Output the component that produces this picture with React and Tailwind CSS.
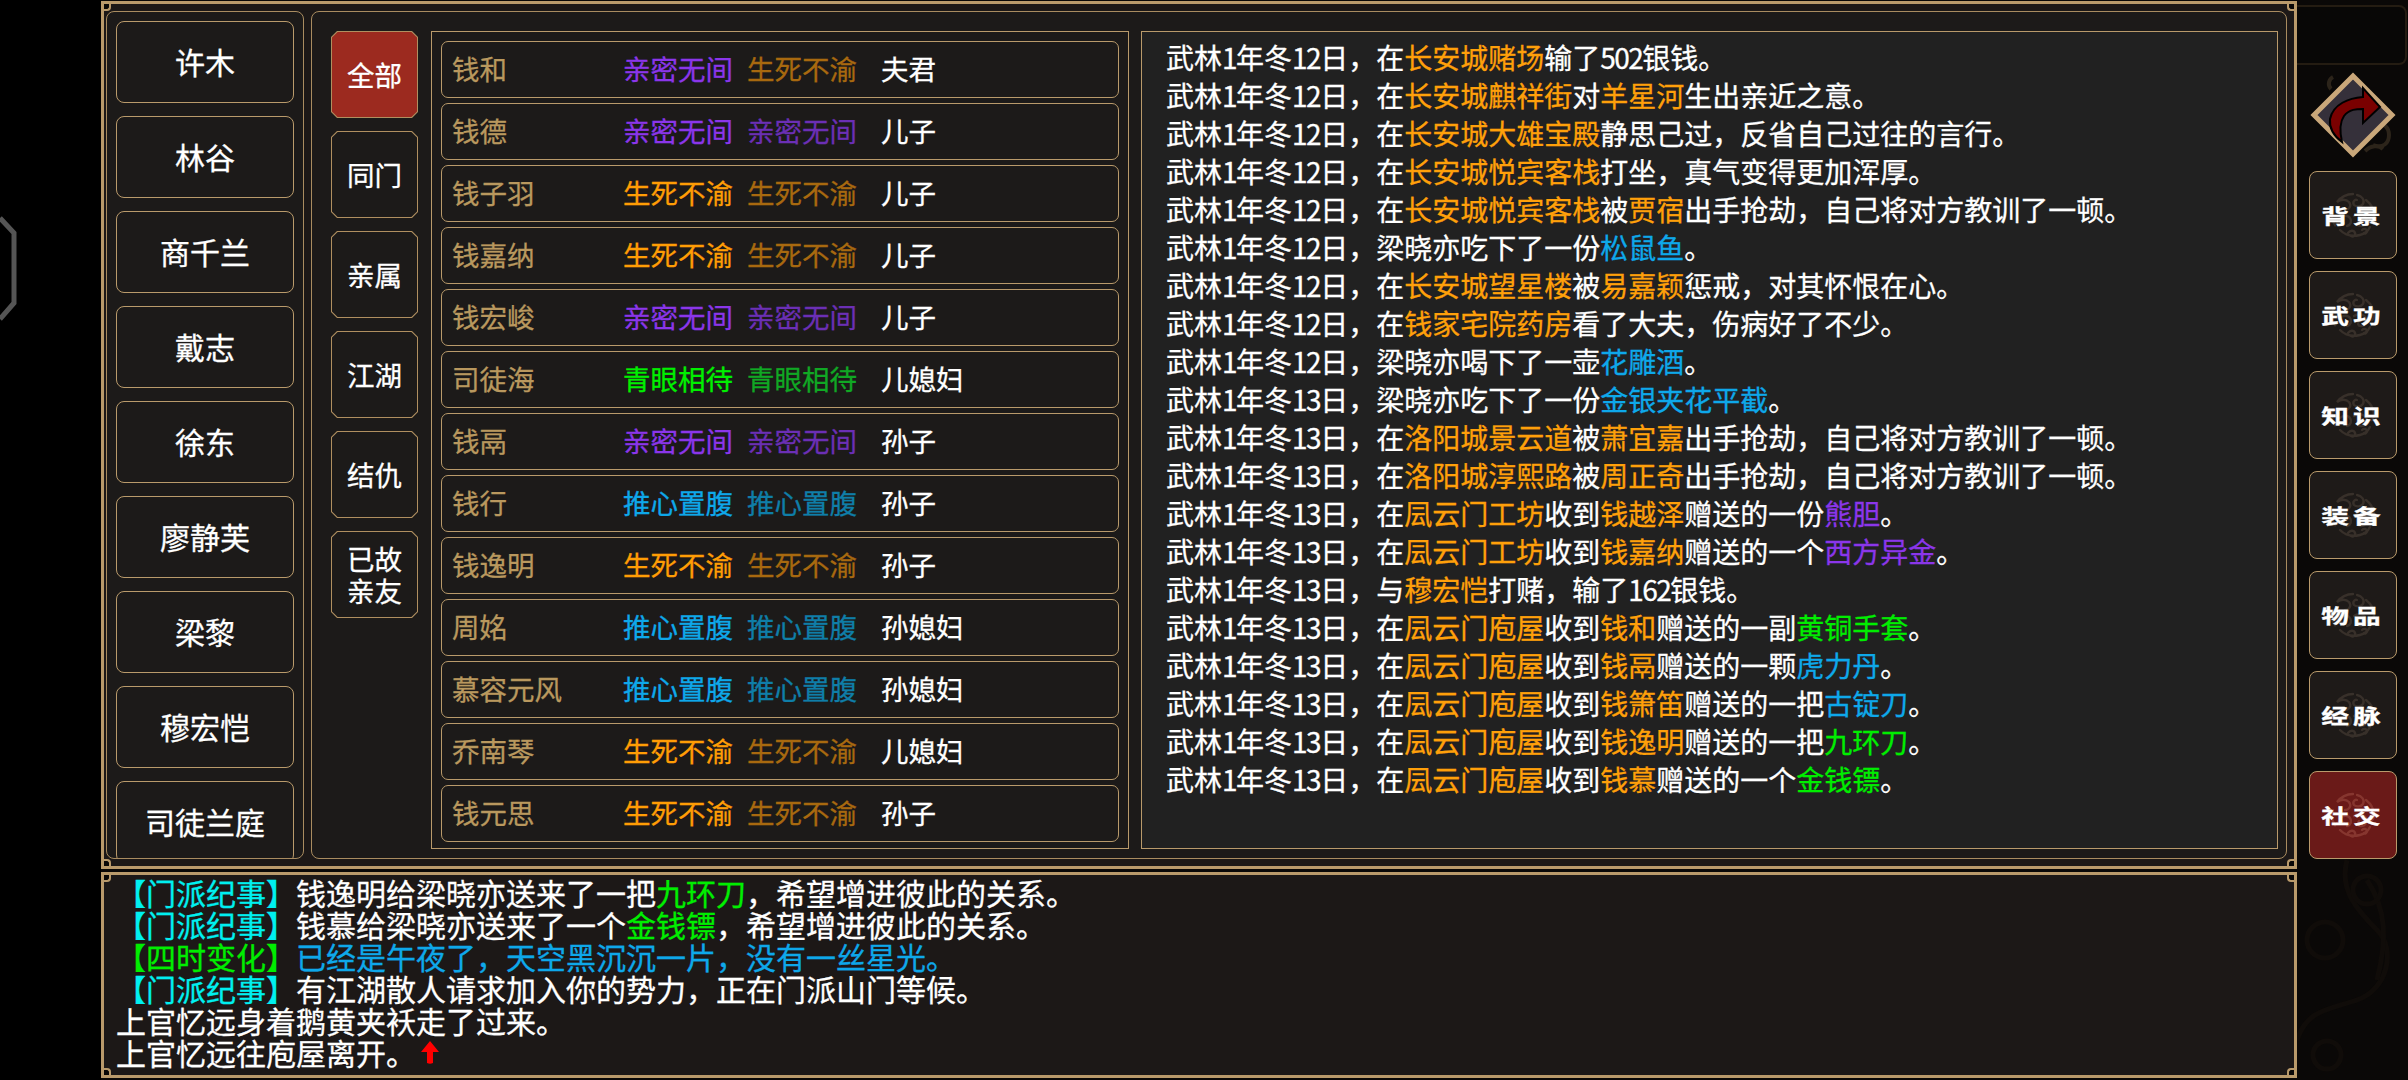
import React from 'react';

const roster = ['许木','林谷','商千兰','戴志','徐东','廖静芙','梁黎','穆宏恺','司徒兰庭'];
const tabs = [['全部'],['同门'],['亲属'],['江湖'],['结仇'],['已故','亲友']];
const Q = { t:'亲密无间', a:'text-[#8b36ea]', b:'text-[#6b2fb5]' };
const S = { t:'生死不渝', a:'text-[#ff9d05]', b:'text-[#a8690f]' };
const T = { t:'推心置腹', a:'text-[#0ea8ea]', b:'text-[#0f7ea8]' };
const G = { t:'青眼相待', a:'text-[#00f000]', b:'text-[#10a824]' };
const rows = [
  ['钱和',Q,S,'夫君'],['钱德',Q,Q,'儿子'],['钱子羽',S,S,'儿子'],['钱嘉纳',S,S,'儿子'],
  ['钱宏峻',Q,Q,'儿子'],['司徒海',G,G,'儿媳妇'],['钱鬲',Q,Q,'孙子'],['钱行',T,T,'孙子'],
  ['钱逸明',S,S,'孙子'],['周姳',T,T,'孙媳妇'],['慕容元风',T,T,'孙媳妇'],['乔南琴',S,S,'儿媳妇'],['钱元思',S,S,'孙子'],
];
const log = [
  '武林1年冬12日，在{o长安城赌场}输了502银钱。',
  '武林1年冬12日，在{o长安城麒祥街}对{o羊星河}生出亲近之意。',
  '武林1年冬12日，在{o长安城大雄宝殿}静思己过，反省自己过往的言行。',
  '武林1年冬12日，在{o长安城悦宾客栈}打坐，真气变得更加浑厚。',
  '武林1年冬12日，在{o长安城悦宾客栈}被{o贾宿}出手抢劫，自己将对方教训了一顿。',
  '武林1年冬12日，梁晓亦吃下了一份{b松鼠鱼}。',
  '武林1年冬12日，在{o长安城望星楼}被{o易嘉颖}惩戒，对其怀恨在心。',
  '武林1年冬12日，在{o钱家宅院药房}看了大夫，伤病好了不少。',
  '武林1年冬12日，梁晓亦喝下了一壶{b花雕酒}。',
  '武林1年冬13日，梁晓亦吃下了一份{b金银夹花平截}。',
  '武林1年冬13日，在{o洛阳城景云道}被{o萧宜嘉}出手抢劫，自己将对方教训了一顿。',
  '武林1年冬13日，在{o洛阳城淳熙路}被{o周正奇}出手抢劫，自己将对方教训了一顿。',
  '武林1年冬13日，在{o凨云门工坊}收到{o钱越泽}赠送的一份{p熊胆}。',
  '武林1年冬13日，在{o凨云门工坊}收到{o钱嘉纳}赠送的一个{p西方异金}。',
  '武林1年冬13日，与{o穆宏恺}打赌，输了162银钱。',
  '武林1年冬13日，在{o凨云门庖屋}收到{o钱和}赠送的一副{g黄铜手套}。',
  '武林1年冬13日，在{o凨云门庖屋}收到{o钱鬲}赠送的一颗{b虎力丹}。',
  '武林1年冬13日，在{o凨云门庖屋}收到{o钱箫笛}赠送的一把{b古锭刀}。',
  '武林1年冬13日，在{o凨云门庖屋}收到{o钱逸明}赠送的一把{g九环刀}。',
  '武林1年冬13日，在{o凨云门庖屋}收到{o钱慕}赠送的一个{g金钱镖}。',
];
const feed = [
  '{c【门派纪事】}钱逸明给梁晓亦送来了一把{g九环刀}，希望增进彼此的关系。',
  '{c【门派纪事】}钱慕给梁晓亦送来了一个{g金钱镖}，希望增进彼此的关系。',
  '{g【四时变化】}{b已经是午夜了，天空黑沉沉一片，没有一丝星光。}',
  '{c【门派纪事】}有江湖散人请求加入你的势力，正在门派山门等候。',
  '上官忆远身着鹅黄夹袄走了过来。',
];
const tone = { o:'text-[#ffa00a]', b:'text-[#0ea8ea]', p:'text-[#8b36ea]', g:'text-[#00ee00]', c:'text-[#00f0f0]' };

function Rich({ s }) {
  const parts = s.split(/(\{[a-z][^}]*\})/).filter(Boolean);
  return parts.map((p, i) => {
    if (p[0] === '{') return <span key={i} className={tone[p[1]]}>{p.slice(2, -1)}</span>;
    return p.split(/(\d+)/).map((q, j) => /^\d+$/.test(q)
      ? <span key={i + '-' + j} className="tracking-[-1.5px]">{q}</span>
      : <span key={i + '-' + j}>{q}</span>);
  });
}

function Notch({ pos }) {
  const c = {
    tl: 'left-0 top-0 border-r-2 border-b-2 rounded-br-[4px]',
    tr: 'right-0 top-0 border-l-2 border-b-2 rounded-bl-[4px]',
    bl: 'left-0 bottom-0 border-r-2 border-t-2 rounded-tr-[4px]',
    br: 'right-0 bottom-0 border-l-2 border-t-2 rounded-tl-[4px]',
  }[pos];
  return <span className={`absolute w-[7px] h-[7px] bg-[#0a0807] border-[#b99a6b] ${c}`} />;
}

function Tab({ lines, active }) {
  return (
    <div className="w-[87px] h-[87px] p-px bg-[#b08f60] [clip-path:polygon(6px_0,81px_0,87px_6px,87px_81px,81px_87px,6px_87px,0_81px,0_6px)]">
      <div className={`w-full h-full flex flex-col items-center justify-center pb-[2px] text-[27.5px] leading-[32px] text-white [clip-path:polygon(5.6px_0,79.4px_0,85px_5.6px,85px_79.4px,79.4px_85px,5.6px_85px,0_79.4px,0_5.6px)] ${active ? 'bg-[#9c2a1f]' : 'bg-[#1c1a19]'}`}>
        {lines.map((l) => <span key={l}>{l}</span>)}
      </div>
    </div>
  );
}

function Emblem() {
  return (
    <svg width="46" height="46" viewBox="0 0 46 46" fill="none" stroke="currentColor" strokeWidth="2.4" strokeLinecap="round" className="absolute left-[20px] top-[20px] opacity-90">
      <path d="M23 2a21 21 0 0 0-16 8c4-3 9-3 12 0 3 4 0 8-4 8" />
      <path d="M27 3c5 1 8 5 6 9-2 3-7 3-9 1-2-3 1-6 3-5" />
      <path d="M36 8c5 4 8 10 8 15 0 4-2 6-4 5" />
      <path d="M3 18c-2 5-1 11 2 15 2-3 6-4 9-2" />
      <path d="M10 26c3-3 8-3 10 0 2 3 1 7-3 8" />
      <path d="M24 24c4-3 10-2 12 2 2 4-1 8-5 8-3 0-4-3-2-5" />
      <path d="M10 38c5 5 12 7 20 5 4-1 8-4 10-8" />
      <path d="M18 41c2-3 6-3 7 0s-2 4-4 3" />
      <path d="M32 38c2-2 5-1 5 1s-2 3-3 2" />
    </svg>
  );
}

function SideBtn({ label, active }) {
  return (
    <div className={`relative w-[88px] h-[88px] shrink-0 rounded-[8px] border-[1.5px] border-[#b99a6b] flex items-center justify-center ${active ? 'bg-[#6a1a18] text-[#8a3a32]' : 'bg-[#1e1a18] text-[#3b332c]'}`}>
      <Emblem />
      <span className="relative text-[21px] leading-none font-bold text-white tracking-[3px] scale-x-[1.32] scale-y-[0.95]">{label}</span>
    </div>
  );
}

export default function App() {
  return (
    <div className="flex w-[2408px] h-[1080px] overflow-hidden bg-black [-webkit-text-stroke:0.3px] font-['Noto_Sans_CJK_SC','Noto_Sans',sans-serif]">
      <div className="w-[101px] shrink-0">
        <svg width="20" height="110" viewBox="0 0 20 110" className="mt-[214px]" fill="none">
          <path d="M0 4 L14 19 L14 89 L0 105" stroke="#555" strokeWidth="5" />
        </svg>
      </div>

      <div className="w-[2196px] shrink-0 flex flex-col pt-px bg-[#0a0807]">
        <div className="relative h-[868px] shrink-0 border-[3px] border-[#b99a6b] bg-[#1c1817] flex gap-[7px] pl-[2px] pr-[7px] pt-[7px] pb-[7px]">
          <Notch pos="tl" /><Notch pos="tr" /><Notch pos="bl" /><Notch pos="br" />
          <div className="w-[198px] shrink-0 h-full rounded-[8px] border border-[#a98c60] bg-[#1c1a19] overflow-hidden flex flex-col gap-[13px] pl-[9px] pt-[9px]">
            {roster.map((n) => (
              <div key={n} className="w-[178px] h-[82px] shrink-0 rounded-[8px] border border-[#b99a6b] flex items-center justify-center pb-[2px] text-[30px] leading-none text-white">{n}</div>
            ))}
          </div>
          <div className="flex-1 h-full rounded-[8px] border border-[#a98c60] bg-[#1c1a19] flex pl-[19px] pt-[19px] gap-[13px]">
            <div className="w-[87px] shrink-0 flex flex-col gap-[13px]">
              {tabs.map((t, i) => <Tab key={t[0]} lines={t} active={i === 0} />)}
            </div>
            <div className="w-[698px] h-[818px] shrink-0 border border-[#b99a6b] flex flex-col gap-[5px] pl-[9px] pt-[9px]">
              {rows.map((r) => (
                <div key={r[0]} className="w-[678px] h-[57px] shrink-0 rounded-[7px] border border-[#b99a6b] flex items-center pl-[10px] pb-[2px] text-[27.5px] leading-none">
                  <span className="w-[171px] shrink-0 text-[#b9985e]">{r[0]}</span>
                  <span className={`w-[124px] shrink-0 ${r[1].a}`}>{r[1].t}</span>
                  <span className={`w-[134px] shrink-0 ${r[2].b}`}>{r[2].t}</span>
                  <span className="text-white">{r[3]}</span>
                </div>
              ))}
            </div>
            <div className="w-[1137px] h-[818px] shrink-0 ml-[-1px] border border-[#b99a6b] bg-[#212121] pl-[24px] pt-[6px] text-[28px] leading-[38px] text-white whitespace-nowrap">
              {log.map((l, i) => <div key={i}><Rich s={l} /></div>)}
            </div>
          </div>
        </div>

        <div className="relative h-[206px] mt-[3px] shrink-0 border-[3px] border-[#b99a6b] bg-[#1c1817] pl-[12px] pt-px text-[30px] leading-[32px] text-white whitespace-nowrap">
          <Notch pos="tl" /><Notch pos="tr" /><Notch pos="bl" /><Notch pos="br" />
          {feed.map((l, i) => <div key={i}><Rich s={l} /></div>)}
          <div className="flex items-center">
            <span>上官忆远往庖屋离开。</span>
            <svg width="18" height="23" viewBox="0 0 18 23" className="ml-[5px]">
              <path d="M9 0 L18 11 L12 11 L12 22 Q9 23.5 6 22 L6 11 L0 11 Z" fill="#f00" />
            </svg>
          </div>
        </div>
      </div>

      <div className="relative flex-1 bg-[#0a0807] overflow-hidden">
        <svg className="absolute left-0 top-[850px]" width="111" height="230" viewBox="0 0 111 230" fill="none" stroke="#100c09" strokeWidth="5">
          <path d="M50 10c-8 30 10 50 30 70s10 60-20 70-50 10-60 40" />
          <path d="M70 30c20 30 20 60 10 100" />
          <circle cx="70" cy="40" r="14" />
          <circle cx="28" cy="90" r="18" />
          <circle cx="30" cy="205" r="14" />
        </svg>
        <div className="relative h-[60px] mt-[5px] w-[110px] rounded-r-[8px] border-2 border-l-0 border-[#241c12] bg-[#080706]" />
        <div className="relative flex flex-col items-start pl-[12px]">
          <svg width="88" height="88" viewBox="0 0 88 88" className="mt-[6px]" fill="none">
            <path d="M22 18c-4-4-2-10 2-12M64 74c10 4 16-2 16-10s-6-12-10-10M56 80c6-6 14-6 18-2" stroke="#2c241a" strokeWidth="4" />
            <path d="M44 5 L83 44 L44 83 L5 44 Z" fill="#35303a" stroke="#c9a77a" strokeWidth="5" />
            <path d="M71 36 L54 17 L54 26 C40 27 24 33 21 48 C20 58 25 65 33 71 C31 62 30 52 35 45 C40 38 48 38 54 38 L54 52 Z" fill="#7a0000" stroke="#000" strokeWidth="2" />
          </svg>
          <div className="flex flex-col gap-[12px] mt-[12px]">
            <SideBtn label="背景" />
            <SideBtn label="武功" />
            <SideBtn label="知识" />
            <SideBtn label="装备" />
            <SideBtn label="物品" />
            <SideBtn label="经脉" />
            <SideBtn label="社交" active />
          </div>
        </div>
      </div>
    </div>
  );
}
